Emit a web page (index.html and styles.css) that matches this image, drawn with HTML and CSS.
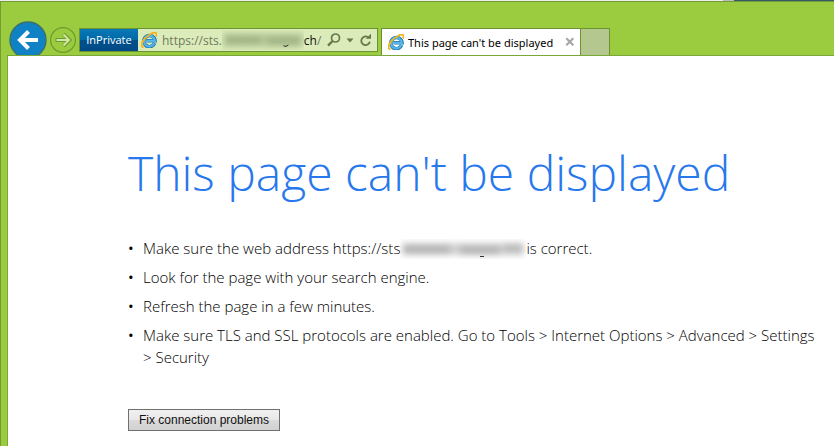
FILE: index.html
```html
<!DOCTYPE html>
<html lang="en">
<head>
<meta charset="utf-8">
<title>This page can't be displayed</title>
<link rel="stylesheet" href="styles.css">
</head>
<body>
<svg class="defs" aria-hidden="true">
  <defs>
    <filter id="soft" x="-20%" y="-60%" width="140%" height="220%"><feGaussianBlur stdDeviation="3"/></filter>
    <symbol id="ie" viewBox="0 0 16 16">
      <path d="M13.6 11.2A5.6 5.6 0 1 1 14 8.8H5.4" fill="none" stroke="#1f78b4" stroke-width="3.6"/>
      <path d="M13.3 11.1A5.4 5.4 0 1 1 13.7 8.8H5.4" fill="none" stroke="#55b4e6" stroke-width="2.2"/>
      <path d="M2.6 15.2C-.6 15.4 0 11 3.6 6.9 7.4 2.600 13.600-.8 15.200 1.200c.6.8.3 2-.3 3.300" fill="none" stroke="#f3b41b" stroke-width="1.800"/>
    </symbol>
  </defs>
</svg>
<div class="behind"><span class="behind-edge"></span><span class="behind-dark"></span></div>
<div class="window">
  <header class="chrome">
    <button class="back" aria-label="Back">
      <svg viewBox="0 0 38 38"><circle cx="19" cy="19" r="18" fill="#0e82c4" stroke="#3c7268" stroke-width="1.500"/><path d="M29 19H11M19.500 10.500L11 19l8.500 8.500" fill="none" stroke="#fff" stroke-width="4"/></svg>
    </button>
    <button class="forward" aria-label="Forward">
      <svg viewBox="0 0 26 26"><circle cx="13" cy="13" r="12.400" fill="none" stroke="#6d9a2e" stroke-width="1.200"/><path d="M5.500 13H19M13.500 7l6 6-6 6" fill="none" stroke="#6d9a2e" stroke-width="3.800"/><path d="M6.500 13H18.500M13.500 7.500l5.500 5.500-5.500 5.500" fill="none" stroke="#cfe8a4" stroke-width="2"/></svg>
    </button>
    <div class="address">
      <span class="private">InPrivate</span>
      <svg class="ie"><use href="#ie"/></svg>
      <span class="url">https://sts.</span>
      <svg class="smear-small" viewBox="0 0 84 20" aria-hidden="true"><g filter="url(#soft)" fill="#8aa070"><rect x="1" y="3" width="82" height="14" opacity=".45"/><rect x="4" y="6" width="36" height="8" opacity=".5"/><rect x="46" y="7" width="34" height="8" opacity=".5"/></g><path d="M63 16q3 1.500 5-1" fill="none" stroke="#222"/></svg>
      <span class="domain">ch<i>/</i></span>
      <button class="tool search" aria-label="Search"><svg viewBox="0 0 14 14"><circle cx="8.500" cy="5" r="4" fill="none" stroke="#65794d" stroke-width="1.700"/><path d="M5.600 8L1 12.600" stroke="#65794d" stroke-width="2.300"/></svg></button>
      <button class="tool more" aria-label="Show address bar list"><svg viewBox="0 0 8 5"><path d="M.5.5h7L4 4.500z" fill="#65794d"/></svg></button>
      <button class="tool refresh" aria-label="Refresh"><svg viewBox="0 0 12 14"><path d="M9.800 8.800A4.300 4.300 0 1 1 8 4.200" fill="none" stroke="#65794d" stroke-width="1.800"/><path d="M5.800 5.800H11V.8z" fill="#65794d"/></svg></button>
    </div>
    <div class="tab">
      <svg class="ie"><use href="#ie"/></svg>
      <span class="tab-title">This page can't be displayed</span>
      <button class="close" aria-label="Close tab"><svg viewBox="0 0 10 10"><path d="M1.300 1.300l7 7M8.300 1.300l-7 7" stroke="#a5a5a5" stroke-width="2.100"/></svg></button>
    </div>
    <button class="new-tab" aria-label="New tab"></button>
  </header>
  <main class="page">
    <h1>This page can't be displayed</h1>
    <ul>
      <li>Make sure the web address https://sts<svg class="smear" viewBox="0 0 126 20" aria-hidden="true"><g filter="url(#soft)" fill="#999"><rect x="2" y="4" width="122" height="12" opacity=".45"/><rect x="4" y="6" width="46" height="9" opacity=".5"/><rect x="60" y="7" width="40" height="9" opacity=".5"/><rect x="104" y="4" width="18" height="10" opacity=".35"/></g><path d="M80 17.500h4" stroke="#333"/></svg>is correct.</li>
      <li>Look for the page with your search engine.</li>
      <li>Refresh the page in a few minutes.</li>
      <li>Make sure TLS and SSL protocols are enabled. Go to Tools &gt; Internet Options &gt; Advanced &gt; Settings &gt; Security</li>
    </ul>
    <button class="fix">Fix connection problems</button>
  </main>
</div>
</body>
</html>
```
FILE: styles.css
```css
* { box-sizing: border-box; }
body {
  margin: 0;
  min-height: 100vh;
  display: flex;
  flex-direction: column;
  background: #fff;
  font-family: "Open Sans", "Noto Sans", sans-serif;
  color: #000;
}
button { margin: 0; padding: 0; border: 0; background: none; font: inherit; }
svg { display: block; flex: none; }
.defs { position: absolute; width: 0; height: 0; }

.behind { display: flex; height: 1px; background: #eee; }
.behind-edge { width: 11px; margin-left: auto; background: #bbb; }
.behind-dark { width: 12%; background: #35586a; }

.window {
  flex: 1;
  display: flex;
  flex-direction: column;
  padding-left: 6px;
  border: solid #739c35;
  border-width: 1px 0 0 1px;
  background: #9bcc40;
}
.chrome {
  display: flex;
  align-items: flex-end;
  height: 53px;
  overflow: hidden;
  padding-left: 2px;
}
.back { width: 38px; height: 38px; margin-bottom: -4px; flex: none; }
.forward { width: 26px; height: 26px; margin: 0 3px 2px; flex: none; }
.address {
  display: flex;
  align-items: center;
  width: 299px;
  height: 24px;
  margin-bottom: 3px;
  border: 1px solid #6d9133;
  background: #dbebb9;
  font-size: 12px;
  color: #70795f;
}
.private {
  align-self: stretch;
  width: 58px;
  font-size: 11px;
  line-height: 22px;
  text-align: center;
  color: #fff;
  background: linear-gradient(#0878b5, #0068a8 50%, #00508c 50%, #004b86);
}
.ie { width: 16px; height: 16px; margin: 0 5px 0 3px; }
.smear-small { width: 82px; height: 20px; }
.domain { color: #111; }
.domain i { font-style: normal; color: #70795f; }
.tool.search { width: 14px; margin-left: 6px; }
.tool.more { width: 8px; margin-left: 5px; }
.tool.refresh { width: 12px; margin-left: 6px; }
.tab {
  display: flex;
  align-items: center;
  width: 200px;
  height: 27px;
  margin-left: 3px;
  padding-left: 3px;
  border: solid #6d9133;
  border-width: 1px 1px 0;
  background: #fff;
  font-family: "Noto Sans", "Open Sans", sans-serif;
  font-size: 11px;
}
.tab .ie { margin-right: 4px; }
.tab-title { flex: 1; white-space: nowrap; }
.close { width: 10px; margin-right: 5px; }
.new-tab {
  width: 29px;
  height: 27px;
  border: solid #6d9133;
  border-width: 1px 1px 0 0;
  background: #b4c78f;
}

.page {
  flex: 1;
  padding: 82px 10px 15px 120px;
  border: solid #7aa73a;
  border-width: 1px 0 0 1px;
  background: #fff;
}
h1 {
  margin: 0 0 29px;
  font-size: 48px;
  line-height: 70px;
  font-weight: 300;
  color: #2778ec;
  white-space: nowrap;
}
ul { margin: 0 0 41px; padding: 0 0 0 15px; list-style: none; }
li {
  margin-bottom: 7px;
  font-size: 15px;
  line-height: 22px;
  font-weight: 300;
}
li::before { content: "•"; float: left; margin-left: -15px; font-weight: 400; }
.smear { display: inline-block; width: 126px; height: 20px; vertical-align: -5px; }
.fix {
  display: block;
  width: 152px;
  height: 22px;
  border: 1px solid #707070;
  background: linear-gradient(#f0f0f0, #e8e8e8 50%, #dadada 50%, #d2d2d2);
  font-family: "Liberation Sans", Arial, sans-serif;
  font-size: 12px;
  color: #111;
}
```
